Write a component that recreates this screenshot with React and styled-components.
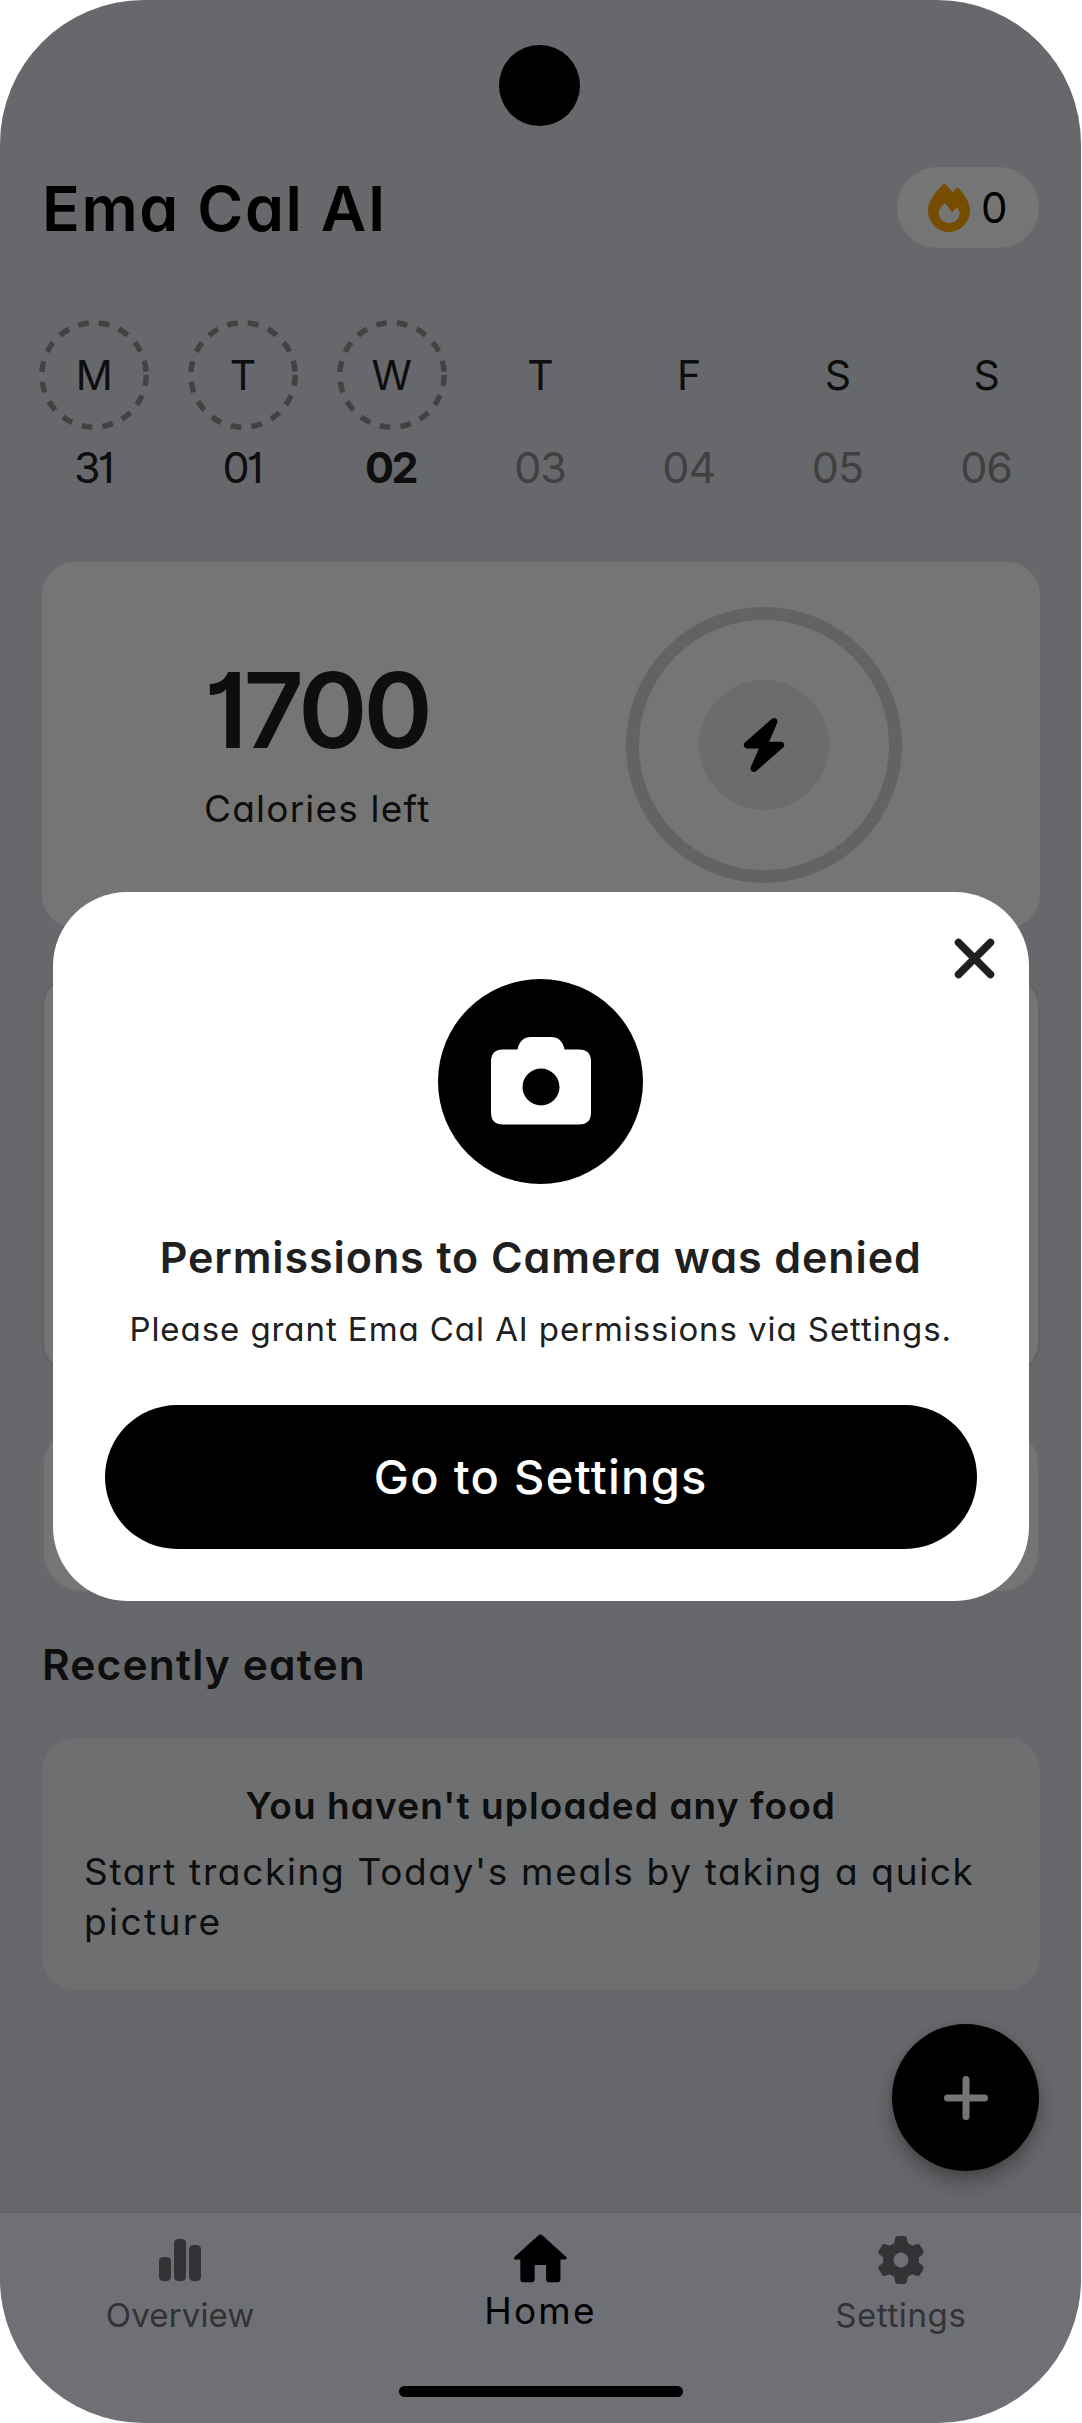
import React from "react";
import styled, { createGlobalStyle, css } from "styled-components";
import { FaBolt, FaGear } from "react-icons/fa6";

const GlobalStyle = createGlobalStyle`
  * { box-sizing: border-box; }
  body { margin: 0; background: #fff; }
`;

const Phone = styled.main`
  position: relative;
  display: flex;
  flex-direction: column;
  width: 1081px;
  height: 2423px;
  overflow: hidden;
  border-radius: 144px;
  background: #e1e3ea;
  color: #202020;
  font-family: Inter, "Liberation Sans", sans-serif;
  font-feature-settings: "cv11", "cv01";
`;

const Label = styled.span`
  display: block;
  white-space: nowrap;
  font-size: ${(p) => p.$size}px;
  font-weight: ${(p) => p.$weight || 400};
  letter-spacing: ${(p) => p.$track || 0}px;
  line-height: ${(p) => p.$line || 50}px;
  ${(p) => p.$track < 0 && css`padding-right: ${-p.$track}px;`}
  ${(p) => p.$color && css`color: ${p.$color};`}
`;

const StatusBar = styled.div`
  flex: none;
  height: 167px;
`;

const CameraHole = styled.div`
  position: absolute;
  z-index: 3;
  top: 45px;
  left: 499px;
  width: 81px;
  height: 81px;
  border-radius: 50%;
  background: #000;
`;

const Header = styled.header`
  display: flex;
  align-items: center;
  justify-content: space-between;
  flex: none;
  height: 81px;
  padding: 0 42px;
`;

const Streak = styled.div`
  display: flex;
  align-items: center;
  gap: 11px;
  width: 142px;
  height: 81px;
  padding-left: 31px;
  border-radius: 41px;
  background: #fff;
`;

const Week = styled.section`
  display: grid;
  grid-template-columns: repeat(7, 1fr);
  flex: none;
  height: 241.5px;
  margin-top: 72px;
  padding: 0 20px;
`;

const Day = styled.div`
  display: flex;
  flex-direction: column;
  align-items: center;
`;

const DayRing = styled.div`
  display: grid;
  place-items: center;
  width: 110px;
  height: 110px;
  margin-bottom: 12px;
  > * { grid-area: 1 / 1; }
`;

const Body = styled.div`
  display: flex;
  flex-direction: column;
  flex: 1;
  padding: 0 41.5px 0 42px;
`;

const CalorieCard = styled.section`
  display: flex;
  align-items: center;
  justify-content: space-between;
  flex: none;
  height: 366.5px;
  padding: 0 137.5px 0 162px;
  border-radius: 33px;
  background: #fff;
`;

const CalorieText = styled.div`
  padding-top: 9px;
`;

const Progress = styled.div`
  display: grid;
  place-items: center;
  width: 276px;
  height: 276px;
  border: 13.5px solid #d8d8d8;
  border-radius: 50%;
`;

const ProgressCore = styled.div`
  display: grid;
  place-items: center;
  width: 130px;
  height: 130px;
  border-radius: 50%;
  background: #ebebeb;
  color: #000;
`;

const Panel = styled.section`
  flex: none;
  height: ${(p) => p.$height}px;
  margin-top: ${(p) => p.$gap}px;
  border: 2.75px solid ${(p) => p.$border};
  border-radius: ${(p) => p.$radius}px;
  background: #fff;
`;

const SectionTitle = styled.div`
  margin-top: 47px;
`;

const EmptyCard = styled.section`
  display: flex;
  flex-direction: column;
  flex: none;
  height: 252px;
  margin-top: 48px;
  padding: 43px 42px 0;
  border-radius: 33px;
  background: #f0f2f5;
`;

const EmptyHeading = styled.div`
  align-self: center;
  margin-bottom: 15.5px;
`;

const Fab = styled.button`
  position: absolute;
  left: 892px;
  top: 2024px;
  display: grid;
  place-items: center;
  width: 147px;
  height: 147px;
  padding: 0;
  border: 0;
  border-radius: 50%;
  background: #000;
  box-shadow: 0 11px 22px rgba(0, 0, 0, 0.3), 0 2px 8px rgba(0, 0, 0, 0.12);
`;

const Nav = styled.nav`
  display: grid;
  grid-template-columns: repeat(3, 1fr);
  flex: none;
  height: 210px;
  background: #f1f3fe;
  box-shadow: 0 -1px 7px rgba(0, 0, 0, 0.08);
`;

const NavItem = styled.div`
  display: flex;
  flex-direction: column;
  align-items: center;
  padding-top: 22px;
  color: ${(p) => (p.$active ? "#000" : "#707073")};
`;

const NavIcon = styled.div`
  display: flex;
  align-items: center;
  justify-content: center;
  height: 49px;
  margin-bottom: ${(p) => p.$gap}px;
  > svg { flex: none; }
`;

const HomeBar = styled.div`
  position: absolute;
  z-index: 3;
  left: 399px;
  bottom: 26px;
  width: 284px;
  height: 11px;
  border-radius: 6px;
  background: #000;
`;

const Overlay = styled.div`
  position: absolute;
  inset: 0;
  z-index: 2;
  background: rgba(0, 0, 0, 0.54);
`;

const Dialog = styled.div`
  position: absolute;
  left: 52.5px;
  top: 892px;
  display: flex;
  flex-direction: column;
  align-items: center;
  width: 976.5px;
  height: 709px;
  padding-top: 87px;
  border-radius: 74px;
  background: #fff;
  color: #202020;
`;

const CloseButton = styled.button`
  position: absolute;
  top: 46px;
  right: 34.5px;
  display: flex;
  padding: 0;
  border: 0;
  background: none;
`;

const Badge = styled.div`
  display: grid;
  place-items: center;
  flex: none;
  width: 205px;
  height: 205px;
  margin-bottom: 48px;
  padding-bottom: 2px;
  border-radius: 50%;
  background: #000;
`;

const PrimaryButton = styled.button`
  width: 872px;
  height: 144px;
  margin-top: 29px;
  padding: 0;
  border: 0;
  border-radius: 72px;
  background: #000;
  color: #fff;
  font: inherit;
  font-feature-settings: inherit;
`;

const Flame = () => (
  <svg width="42" height="48" viewBox="0 0 448 512">
    <path
      fill="#ffa500"
      fillRule="evenodd"
      d="M159.3 5.4c7.8-7.3 19.9-7.2 27.7.1c27.6 25.9 53.5 53.8 77.7 84c11-14.4 23.5-30.1 37-42.9c7.9-7.4 20.1-7.4 28 .1c34.6 33 63.9 76.6 84.5 118c20.3 40.8 33.8 82.5 33.8 111.9C448 404.2 348.2 512 224 512C98.4 512 0 404.1 0 276.5c0-38.4 17.8-85.3 45.4-131.7C73.3 97.7 112.7 48.6 159.3 5.4zM168 210c5-6 14-6 19 0c22 24 38 46 56 74c5 14 17 16 25 8l31-34c7-7 17-7 21 2c12 20 17 36 17 51c0 60-49 104-111 104s-111-46-111-106c0-36 24-66 53-99z"
    />
  </svg>
);

const DashedRing = () => (
  <svg width="110" height="110" viewBox="0 0 110 110">
    <circle cx="55" cy="55" r="52.2" fill="none" stroke="#909090" strokeWidth="5.5" strokeDasharray="10.8 10.07" />
  </svg>
);

const Bars = () => (
  <svg width="42" height="42" viewBox="0 0 42 42" fill="currentColor">
    <rect x="0" y="18" width="12" height="24" rx="4.2" />
    <rect x="15" y="0" width="12" height="42" rx="4.2" />
    <rect x="30" y="6" width="12" height="36" rx="4.2" />
  </svg>
);

const House = () => (
  <svg width="68.75" height="68.75" viewBox="0 0 24 24" fill="currentColor">
    <path d="M10 19v-5h4v5c0 .55.45 1 1 1h3c.55 0 1-.45 1-1v-7h1.7c.46 0 .68-.57.33-.87L12.67 3.6c-.38-.34-.96-.34-1.34 0l-8.36 7.53c-.34.3-.13.87.33.87H5v7c0 .55.45 1 1 1h3c.55 0 1-.45 1-1z" />
  </svg>
);

const CameraIcon = () => (
  <svg width="100" height="88" viewBox="0 0 100 88">
    <path
      fill="#fff"
      fillRule="evenodd"
      d="M40 0H60Q71 0 73.500 12.500H88Q100 12.500 100 24.500V75.500Q100 87.500 88 87.500H12Q0 87.500 0 75.500V24.500Q0 12.500 12 12.500H26.500Q29 0 40 0ZM50 31.500A18.500 18.500 0 1 0 50 68.500A18.500 18.500 0 1 0 50 31.500Z"
    />
  </svg>
);

const days = [
  { name: "M", date: "31", logged: true, track: -3 },
  { name: "T", date: "01", logged: true, track: -3 },
  { name: "W", date: "02", logged: true, today: true, track: -2.5 },
  { name: "T", date: "03", future: true, track: -1 },
  { name: "F", date: "04", future: true, track: -1 },
  { name: "S", date: "05", future: true, track: -1 },
  { name: "S", date: "06", future: true, track: -1 },
];

export default function App() {
  return (
    <>
      <GlobalStyle />
      <Phone>
        <StatusBar />
        <CameraHole />
        <Header>
          <Label $size={62.5} $weight={600} $line={84} $track={1.6} $color="#000">Ema Cal AI</Label>
          <Streak>
            <Flame />
            <Label $size={42} $track={-1} $color="#000">0</Label>
          </Streak>
        </Header>
        <Week>
          {days.map((day) => (
            <Day key={day.date}>
              <DayRing>
                {day.logged && <DashedRing />}
                <Label $size={41}>{day.name}</Label>
              </DayRing>
              <Label
                $size={43}
                $weight={day.today ? 700 : 400}
                $track={day.track}
                $color={day.future ? "#8c8c8c" : undefined}
              >
                {day.date}
              </Label>
            </Day>
          ))}
        </Week>
        <Body>
          <CalorieCard>
            <CalorieText>
              <Label $size={105} $weight={600} $line={120} $track={-4}>1700</Label>
              <Label $size={37} $line={78} $track={1.2}>Calories left</Label>
            </CalorieText>
            <Progress>
              <ProgressCore><FaBolt size={54} /></ProgressCore>
            </Progress>
          </CalorieCard>
          <Panel $height={401} $gap={46} $radius={33} $border="#d8d8d8" />
          <Panel $height={168} $gap={50} $radius={41} $border="#e6e6e6" />
          <SectionTitle>
            <Label $size={42.5} $weight={600} $track={1.15}>Recently eaten</Label>
          </SectionTitle>
          <EmptyCard>
            <EmptyHeading>
              <Label $size={37} $weight={600} $track={1.1}>You haven't uploaded any food</Label>
            </EmptyHeading>
            <Label $size={37} $track={1.66}>Start tracking Today's meals by taking a quick</Label>
            <Label $size={37} $track={2.4}>picture</Label>
          </EmptyCard>
        </Body>
        <Fab aria-label="Add">
          <svg width="44" height="44" viewBox="0 0 44 44" stroke="#fff" strokeWidth="7" strokeLinecap="round">
            <path d="M22 3.500V40.500M3.500 22H40.500" />
          </svg>
        </Fab>
        <Nav>
          <NavItem>
            <NavIcon $gap={5.5}><Bars /></NavIcon>
            <Label $size={33} $track={0.15}>Overview</Label>
          </NavItem>
          <NavItem $active>
            <NavIcon $gap={2}><House /></NavIcon>
            <Label $size={37} $track={2.2}>Home</Label>
          </NavItem>
          <NavItem>
            <NavIcon $gap={5.5}><FaGear size={48} /></NavIcon>
            <Label $size={33} $track={0.6}>Settings</Label>
          </NavItem>
        </Nav>
        <HomeBar />
        <Overlay>
          <Dialog role="dialog">
            <CloseButton aria-label="Close">
              <svg width="41" height="41" viewBox="0 0 41 41" stroke="#202020" strokeWidth="7.5" strokeLinecap="round">
                <path d="M4.500 4.500L36.500 36.500M36.500 4.500L4.500 36.500" />
              </svg>
            </CloseButton>
            <Badge><CameraIcon /></Badge>
            <Label $size={43} $weight={600} $track={0.92}>Permissions to Camera was denied</Label>
            <Label $size={33} $line={94} $track={0.93}>Please grant Ema Cal AI permissions via Settings.</Label>
            <PrimaryButton>
              <Label $size={47} $weight={500} $line={144} $track={1.3}>Go to Settings</Label>
            </PrimaryButton>
          </Dialog>
        </Overlay>
      </Phone>
    </>
  );
}
